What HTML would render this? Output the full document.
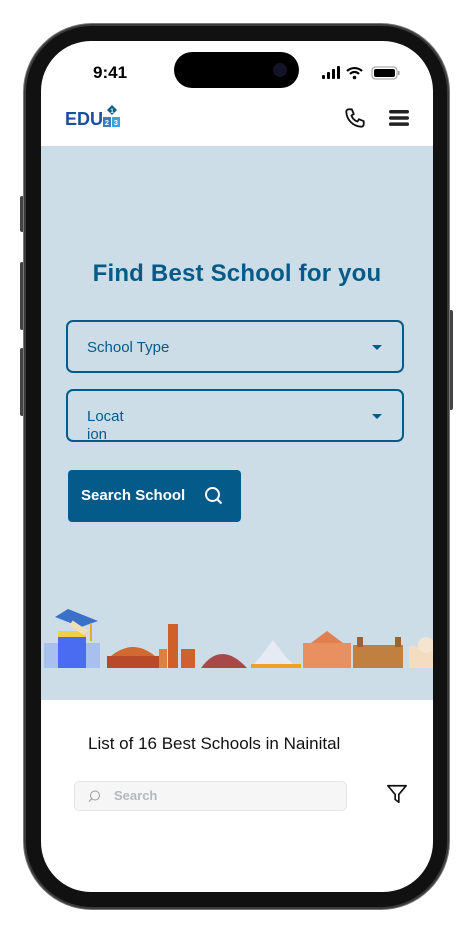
<!DOCTYPE html>
<html><head><meta charset="utf-8"><style>
*{margin:0;padding:0;box-sizing:border-box}
body{width:473px;height:932px;background:#fff;position:relative;overflow:hidden;font-family:"Liberation Sans",sans-serif}
.frame{position:absolute;left:24px;top:24px;width:425px;height:885px;border-radius:68px;background:#111;border:2px solid #3a3a3a;box-shadow:0 0 0 1px #777}
.screen{position:absolute;left:41px;top:41px;width:392px;height:851px;border-radius:50px;background:#fff;overflow:hidden}
.btnside{position:absolute;background:#444;width:4px;left:20px;border-radius:2px}
.island{position:absolute;left:133px;top:11px;width:125px;height:36px;border-radius:18px;background:#000}
.time{position:absolute;left:52px;top:22px;font-size:17px;font-weight:bold;color:#000}
.hero{position:absolute;left:0;top:105px;width:392px;height:554px;background:#ccdde7}
h1{position:absolute;left:0;width:392px;top:114px;text-align:center;font-size:24px;color:#045b89;font-weight:bold;letter-spacing:.2px}
.sel{position:absolute;left:25px;width:338px;height:53px;border:2px solid #045b89;border-radius:7px;color:#045b89;font-size:15px}
.sel span{position:absolute;left:19px}
.caret{position:absolute;right:20px;top:23px;width:0;height:0;border-left:5px solid transparent;border-right:5px solid transparent;border-top:5px solid #045b89}
.btn{position:absolute;left:27px;top:324px;width:173px;height:52px;background:#045b89;border-radius:4px;color:#fff;font-weight:bold;font-size:15px}
</style></head><body>
<div class="btnside" style="top:196px;height:36px"></div>
<div class="btnside" style="top:262px;height:68px"></div>
<div class="btnside" style="top:348px;height:68px"></div>
<div class="btnside" style="left:449px;top:310px;height:100px"></div>
<div class="frame"></div>
<div class="screen">
 <div class="time">9:41</div>
 <div class="island"><div style="position:absolute;right:12px;top:11px;width:14px;height:14px;border-radius:50%;background:#141428"></div></div>
 <svg style="position:absolute;left:280px;top:25px" width="80" height="14" viewBox="0 0 80 14">
  <rect x="1" y="9" width="3" height="4" rx="1"/><rect x="6" y="6" width="3" height="7" rx="1"/><rect x="11" y="3" width="3" height="10" rx="1"/><rect x="16" y="0" width="3" height="13" rx="1"/>
  <path d="M26 5a11 11 0 0 1 15 0M29 8a6 6 0 0 1 9 0" stroke="#000" stroke-width="2.2" fill="none"/><circle cx="33.5" cy="11.5" r="1.8"/>
  <rect x="51" y="1" width="25" height="12" rx="3.5" fill="none" stroke="#999"/><rect x="53" y="3" width="21" height="8" rx="2"/><rect x="77" y="5" width="1.5" height="4" fill="#999"/>
 </svg>
 <div style="position:absolute;left:24px;top:68px;font-size:18px;font-weight:bold;color:#1a4fa0">EDU</div>
 <svg style="position:absolute;left:61px;top:64px" width="20" height="24" viewBox="0 0 20 24"><path d="M10 0l5 5-5 5-5-5z" fill="#0b5f86"/><text x="10" y="8" font-size="6" fill="#fff" text-anchor="middle" font-family="Liberation Sans" font-weight="bold">1</text><rect x="1" y="12" width="8" height="10" fill="#3f79c8"/><rect x="10" y="12" width="8" height="10" fill="#3aa6e0"/><text x="5" y="20" font-size="7" fill="#fff" text-anchor="middle" font-family="Liberation Sans" font-weight="bold">2</text><text x="14" y="20" font-size="7" fill="#fff" text-anchor="middle" font-family="Liberation Sans" font-weight="bold">3</text></svg>
 <svg style="position:absolute;left:303px;top:66px" width="22" height="22" viewBox="0 0 24 24"><path d="M5 2.5h3.5l2.2 5.2-2.6 1.6a11 11 0 0 0 6.6 6.6l1.6-2.6 5.2 2.2V19a2.5 2.5 0 0 1-2.5 2.5A17 17 0 0 1 2.5 5 2.5 2.5 0 0 1 5 2.5" fill="none" stroke="#111" stroke-width="2" stroke-linejoin="round"/></svg>
 <svg style="position:absolute;left:348px;top:68px" width="20" height="18" viewBox="0 0 20 18"><rect y="1" width="20" height="3.5" rx="1.7" fill="#222"/><rect y="7.2" width="20" height="3.5" rx="1.7" fill="#222"/><rect y="13.4" width="20" height="3.5" rx="1.7" fill="#222"/></svg>
 <div class="hero">
  <h1>Find Best School for you</h1>
  <div class="sel" style="top:174px"><span style="top:17px">School Type</span><div class="caret"></div></div>
  <div class="sel" style="top:243px;overflow:hidden"><span style="top:17px;line-height:18px">Locat<br>ion</span><div class="caret"></div></div>
  <div class="btn"><span style="position:absolute;left:13px;top:17px">Search School</span>
   <svg style="position:absolute;left:136px;top:16px" width="20" height="20" viewBox="0 0 20 20"><circle cx="8.5" cy="8.5" r="6.5" fill="none" stroke="#fff" stroke-width="2"/><path d="M13.5 13.5l4 4" stroke="#fff" stroke-width="2"/></svg></div>
  <svg style="position:absolute;left:0;top:455px" width="392" height="75" viewBox="0 0 392 75">
   <rect x="3" y="42" width="56" height="25" fill="#a8c0f0"/><rect x="17" y="35" width="28" height="32" fill="#4a6cf0"/><rect x="17" y="30" width="28" height="6" fill="#f0d040"/>
   <path d="M27 8l30 12-17 6-26-10z" fill="#3a70c8"/><path d="M30 22l15 10" stroke="#efe0b0" stroke-width="6"/><path d="M50 22v18" stroke="#e0b020" stroke-width="2"/>
   <rect x="66" y="55" width="52" height="12" fill="#b84a2a"/><path d="M70 55q22-18 44 0" fill="#d06a30"/>
   <rect x="127" y="23" width="10" height="44" fill="#d0602a"/><rect x="118" y="48" width="8" height="19" fill="#e08040"/><rect x="140" y="48" width="14" height="19" fill="#d06030"/>
   <path d="M160 67q20-28 46 0z" fill="#a84848"/>
   <path d="M210 67l10-12 12-16 12 16 12 12z" fill="#e6eaf4"/><rect x="210" y="63" width="50" height="4" fill="#f0a020"/>
   <rect x="262" y="42" width="48" height="25" fill="#e89060"/><path d="M270 42l16-12 16 12z" fill="#e08050"/>
   <rect x="312" y="44" width="50" height="23" fill="#c08040"/><rect x="316" y="36" width="6" height="10" fill="#a06030"/><rect x="354" y="36" width="6" height="10" fill="#a06030"/>
   <rect x="368" y="45" width="24" height="22" fill="#f4dcc0"/><circle cx="385" cy="44" r="8" fill="#f4e4d0"/>
  </svg>
 </div>
 <div style="position:absolute;left:47px;top:693px;font-size:17px;color:#111">List of 16 Best Schools in Nainital</div>
 <div style="position:absolute;left:33px;top:740px;width:273px;height:30px;background:#f6f6f6;border:1px solid #e4e4e4;border-radius:5px">
  <svg style="position:absolute;left:13px;top:8px" width="13" height="13" viewBox="0 0 13 13"><circle cx="7" cy="5.5" r="4.5" fill="none" stroke="#999" stroke-width="1"/><path d="M3.8 8.7L1 11.5" stroke="#999"/></svg>
  <span style="position:absolute;left:39px;top:6px;font-size:13px;font-weight:bold;color:#b4b8c0">Search</span></div>
 <svg style="position:absolute;left:345px;top:742px" width="22" height="22" viewBox="0 0 24 24"><path d="M2 3h20l-8 9.5V21l-4-3v-5.5z" fill="none" stroke="#111" stroke-width="1.8" stroke-linejoin="round"/></svg>
</div>
</body></html>
